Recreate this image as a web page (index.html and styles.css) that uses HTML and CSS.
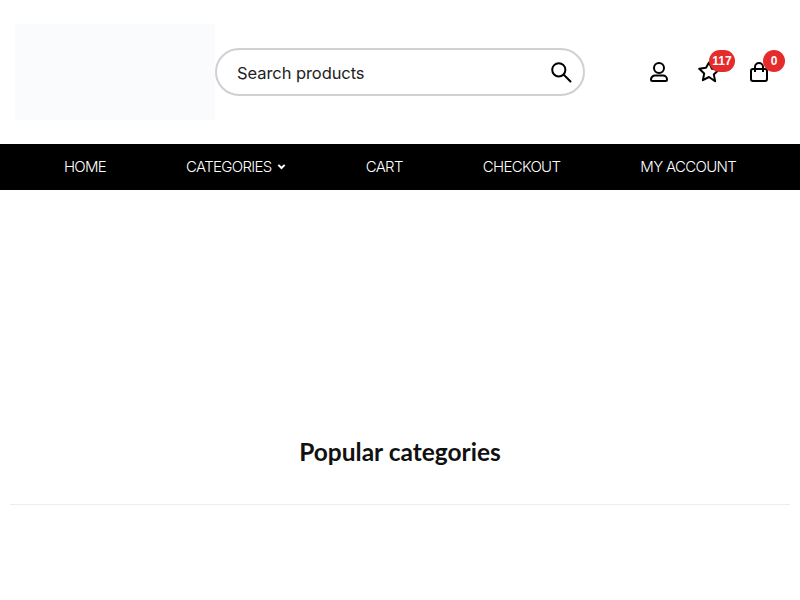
FILE: index.html
```html
<!DOCTYPE html>
<html>
<head>
  <meta name="viewport" content="width=device-width, initial-scale=1.0">
  <link rel="stylesheet" href="styles.css">
</head>
<body>

<header class="site-header">
  <div class="logo"></div>
  <form class="search">
    <span class="search-text">Search products</span>
    <svg class="search-icon" viewBox="0 0 24 24" width="24" height="24" fill="none" stroke="#000" stroke-width="2" stroke-linecap="round">
      <circle cx="9.8" cy="9.8" r="6.6"/>
      <path d="M14.8 14.8l6.7 6.7"/>
    </svg>
  </form>
  <div class="header-icons">
    <a class="icon-link">
      <svg viewBox="0 0 24 24" width="24" height="24" fill="none" stroke="#000" stroke-width="2" stroke-linejoin="round">
        <circle cx="12" cy="8" r="5"/>
        <path d="M8 15.5h8a4 4 0 0 1 4 4v0a1.5 1.5 0 0 1-1.500 1.500h-13a1.500 1.500 0 0 1-1.500-1.500v0a4 4 0 0 1 4-4z"/>
      </svg>
    </a>
    <a class="icon-link">
      <svg viewBox="0 0 24 24" width="24" height="24" fill="none" stroke="#000" stroke-width="2" stroke-linejoin="round">
        <path d="M12 2.500l3 6.300 6.800.9-5 4.700 1.300 6.800L12 17l-6.100 3.200 1.300-6.800-5-4.700 6.800-.9z"/>
      </svg>
      <span class="badge badge-wide">117</span>
    </a>
    <a class="icon-link">
      <svg viewBox="0 0 24 24" width="24" height="24" fill="none" stroke="#000" stroke-width="2" stroke-linejoin="round">
        <rect x="4" y="9" width="16" height="12" rx="2"/>
        <path d="M8 12V7a4 4 0 0 1 8 0v5"/>
      </svg>
      <span class="badge">0</span>
    </a>
  </div>
</header>

<nav class="main-nav">
  <a>HOME</a>
  <a>CATEGORIES
    <svg viewBox="0 0 10 10" width="9" height="9" fill="none" stroke="#fff" stroke-width="2.2">
      <path d="M1.5 3.2L5 6.7l3.5-3.5"/>
    </svg>
  </a>
  <a>CART</a>
  <a>CHECKOUT</a>
  <a>MY ACCOUNT</a>
</nav>

<section class="popular">
  <h2>Popular categories</h2>
  <div class="divider"></div>
</section>

</body>
</html>
```

FILE: styles.css
```css
body {
  margin: 0;
  font-family: 'Inter', 'Liberation Sans', sans-serif;
  background: #fff;
  color: #000;
}

.site-header {
  display: flex;
  align-items: center;
  height: 144px;
  padding-left: 15px;
  box-sizing: border-box;
}

.logo {
  width: 200px;
  height: 96px;
  background: #fafbfc;
}

.search {
  display: flex;
  align-items: center;
  justify-content: space-between;
  width: 370px;
  height: 48px;
  padding: 0 10px 0 20px;
  box-sizing: border-box;
  border: 2px solid #d0d0d0;
  border-radius: 24px;
}

.search-text {
  padding-top: 2px;
  font-size: 16.5px;
  letter-spacing: -0.07px;
  color: #222;
}

.header-icons {
  display: flex;
  gap: 26px;
  margin-left: 62px;
}

.icon-link {
  position: relative;
  display: flex;
}

.badge {
  position: absolute;
  top: -10px;
  right: -14px;
  min-width: 22px;
  height: 22px;
  border-radius: 11px;
  background: #e52b2b;
  color: #fff;
  font-family: 'Liberation Sans', sans-serif;
  font-size: 12px;
  font-weight: bold;
  line-height: 22px;
  text-align: center;
}

.badge-wide {
  min-width: 26px;
}

.main-nav {
  display: flex;
  justify-content: center;
  align-items: center;
  gap: 80px;
  height: 46px;
  padding-bottom: 2px;
  box-sizing: border-box;
  background: #000;
}

.main-nav a {
  display: flex;
  align-items: center;
  gap: 5px;
  color: #fff;
  font-size: 15px;
  font-weight: 300;
  letter-spacing: -0.68px;
}

.popular {
  padding: 0 10px;
}

.popular h2 {
  margin: 0;
  padding-top: 247px;
  font-family: 'Lato', sans-serif;
  font-size: 24.5px;
  font-weight: bold;
  line-height: 30px;
  text-align: center;
  color: #111;
}

.divider {
  margin-top: 37px;
  border-top: 1px solid #eee;
}
```
